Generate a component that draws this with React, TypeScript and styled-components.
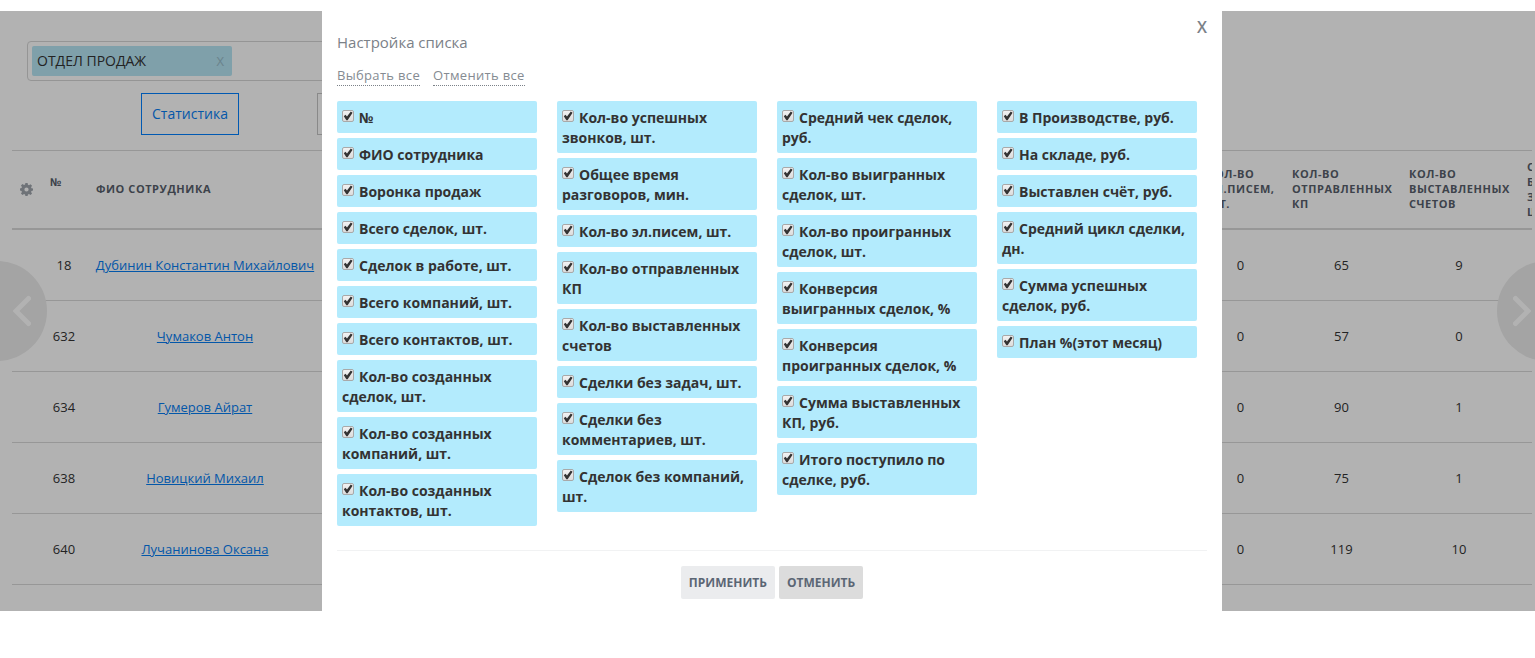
import React, { useState } from "react";
import styled, { createGlobalStyle } from "styled-components";

const GlobalStyle = createGlobalStyle`
  *, *::before, *::after { box-sizing: border-box; }
  body {
    margin: 0;
    background: #fff;
    color: #333;
    font-family: "Open Sans", "Noto Sans", sans-serif;
    font-size: 13px;
    line-height: 20px;
  }
  button { font-family: inherit; cursor: pointer; }
`;

const Screen = styled.div`
  position: relative;
  padding-top: 11px;
  overflow: hidden;
`;

const Page = styled.main`
  position: relative;
  padding: 30px 3px 26px 12px;
  overflow: hidden;
`;

const Shade = styled.div`
  position: absolute;
  inset: 0;
  background: rgba(0, 0, 0, 0.3);
`;

const FilterBox = styled.div`
  display: flex;
  width: 60%;
  height: 40px;
  margin-left: 15px;
  padding: 4px;
  border: 1px solid #d6d6d6;
  border-radius: 4px;
`;

const FilterTag = styled.div`
  display: flex;
  align-items: center;
  justify-content: space-between;
  width: 200px;
  padding: 0 8px 0 5px;
  border-radius: 2px;
  background: #b6e5f4;
  font-size: 14px;
`;

const TagRemove = styled.button`
  padding: 0;
  border: 0;
  background: none;
  color: #98bcc9;
  font-size: 13px;
`;

const ViewTabs = styled.div`
  display: flex;
  gap: 78px;
  margin: 12px 0 15px 129px;
`;

const ViewTab = styled.button<{ $active?: boolean }>`
  min-width: 98px;
  height: 42px;
  padding: 0 10px 2px;
  border: 1px solid ${(p) => (p.$active ? "#0080ff" : "#c4c4c4")};
  background: none;
  color: #057df2;
  font-size: 14px;
`;

const TableFrame = styled.div`
  overflow: hidden;
`;

const StatTable = styled.table`
  width: calc(100% + 86px);
  table-layout: fixed;
  border-collapse: separate;
  border-spacing: 0;
  border-top: 1px solid #d9d9d9;
`;

const HeadCell = styled.th`
  height: 79px;
  padding: 0 9px 2px;
  border-bottom: 2px solid #d9d9d9;
  color: #585f6c;
  font-size: 11px;
  font-weight: 700;
  line-height: 15px;
  letter-spacing: 0.05em;
  text-align: left;
  text-transform: uppercase;
  vertical-align: middle;
`;

const TopLine = styled.div`
  height: 30px;
`;

const Cell = styled.td`
  height: 71px;
  padding: 0;
  border-bottom: 1px solid #d9d9d9;
  text-align: center;
`;

const PersonLink = styled.a`
  color: #057df2;
  text-decoration: underline;
  white-space: nowrap;
`;

const GearButton = styled.button`
  display: block;
  margin: 2px 0 0 -1px;
  padding: 0;
  border: 0;
  background: none;
  color: #9fa5ad;
  svg { display: block; }
`;

const Pager = styled.button<{ $side: "left" | "right" }>`
  position: absolute;
  top: 250px;
  ${(p) => (p.$side === "left" ? "left: -53px;" : "right: -62px;")}
  display: flex;
  align-items: center;
  justify-content: ${(p) => (p.$side === "left" ? "flex-end" : "flex-start")};
  width: 100px;
  height: 100px;
  padding: 0 16px;
  border: 0;
  border-radius: 50%;
  background: #ebebeb;
  color: #fff;
`;

const Overlay = styled.div`
  position: absolute;
  inset: 0;
  display: flex;
  justify-content: center;
  padding-left: 9px;
`;

const Dialog = styled.section`
  position: relative;
  width: 900px;
  padding: 32px 15px 12px;
  background: #fff;
  color: #7b8188;
`;

const CloseButton = styled.button`
  position: absolute;
  top: 16px;
  right: 15px;
  padding: 0;
  border: 0;
  background: none;
  color: #7b8188;
  font-size: 16px;
  font-weight: 600;
  line-height: 22px;
`;

const Title = styled.h2`
  margin: 0;
  font-size: 15px;
  font-weight: 400;
  line-height: 20px;
`;

const BulkActions = styled.div`
  display: flex;
  gap: 13px;
  margin: 13px 0 15px;
`;

const BulkButton = styled.button`
  padding: 0;
  border: 0;
  border-bottom: 1px dotted #7b8188;
  background: none;
  color: #858b92;
  font-size: 13px;
  line-height: 20px;
  letter-spacing: 0.025em;
`;

const Columns = styled.div`
  display: grid;
  grid-template-columns: repeat(4, 200px);
  gap: 20px;
  align-items: start;
`;

const Column = styled.div`
  display: flex;
  flex-direction: column;
  gap: 5px;
`;

const Option = styled.label`
  padding: 7px 5px 5px;
  border-radius: 2px;
  background: #b3ebfd;
  color: #333;
  font-size: 14px;
  font-weight: 700;
  line-height: 20px;
  cursor: pointer;
`;

const Check = styled.input`
  appearance: none;
  width: 12px;
  height: 12px;
  margin: 0 5px 0 0;
  border: 1px solid #a9a9a9;
  border-radius: 2px;
  background: linear-gradient(#f2f2f2, #dcdcdc);
  vertical-align: 1px;
  &:checked::before {
    content: "";
    display: block;
    width: 10px;
    height: 10px;
    background: #333;
    clip-path: polygon(8% 52%, 24% 38%, 40% 56%, 78% 5%, 96% 18%, 46% 92%, 34% 92%);
  }
`;

const Footer = styled.footer`
  display: flex;
  justify-content: center;
  gap: 4px;
  margin-top: 24px;
  padding-top: 15px;
  border-top: 1px solid #f1f2f3;
`;

const FooterButton = styled.button<{ $dark?: boolean }>`
  height: 33px;
  padding: 0 8px;
  border: 0;
  border-radius: 2px;
  background: ${(p) => (p.$dark ? "#dcdcdc" : "#ebecee")};
  color: #5b6674;
  font-size: 12px;
  font-weight: 700;
  text-transform: uppercase;
`;

const optionColumns = [
  [
    "№",
    "ФИО сотрудника",
    "Воронка продаж",
    "Всего сделок, шт.",
    "Сделок в работе, шт.",
    "Всего компаний, шт.",
    "Всего контактов, шт.",
    "Кол-во созданных сделок, шт.",
    "Кол-во созданных компаний, шт.",
    "Кол-во созданных контактов, шт.",
  ],
  [
    "Кол-во успешных звонков, шт.",
    "Общее время разговоров, мин.",
    "Кол-во эл.писем, шт.",
    "Кол-во отправленных КП",
    "Кол-во выставленных счетов",
    "Сделки без задач, шт.",
    "Сделки без комментариев, шт.",
    "Сделок без компаний, шт.",
  ],
  [
    "Средний чек сделок, руб.",
    "Кол-во выигранных сделок, шт.",
    "Кол-во проигранных сделок, шт.",
    "Конверсия выигранных сделок, %",
    "Конверсия проигранных сделок, %",
    "Сумма выставленных КП, руб.",
    "Итого поступило по сделке, руб.",
  ],
  [
    "В Производстве, руб.",
    "На складе, руб.",
    "Выставлен счёт, руб.",
    "Средний цикл сделки, дн.",
    "Сумма успешных сделок, руб.",
    "План %(этот месяц)",
  ],
];

const allOptions = optionColumns.flat();

const people = [
  { id: 18, name: "Дубинин Константин Михайлович", mails: 0, offers: 65, bills: 9 },
  { id: 632, name: "Чумаков Антон", mails: 0, offers: 57, bills: 0 },
  { id: 634, name: "Гумеров Айрат", mails: 0, offers: 90, bills: 1 },
  { id: 638, name: "Новицкий Михаил", mails: 0, offers: 75, bills: 1 },
  { id: 640, name: "Лучанинова Оксана", mails: 0, offers: 119, bills: 10 },
];

const GearIcon = () => (
  <svg width="13" height="13" viewBox="0 0 13 13" aria-hidden="true">
    <path
      fill="currentColor"
      fillRule="evenodd"
      d="M5.4 0h2.2l.35 1.75 1.05.44 1.5-1 1.55 1.55-1 1.5.44 1.05L13 5.4v2.2l-1.51.35-.44 1.05 1 1.5-1.55 1.55-1.5-1-1.05.44L7.6 13H5.4l-.35-1.51L4 11.05l-1.5 1L.95 10.5l1-1.5-.44-1.05L0 7.6V5.4l1.51-.3.44-1.1-1-1.5L2.5.95l1.5 1 1.05-.44zM6.5 4.4a2.1 2.1 0 1 0 0 4.2 2.1 2.1 0 0 0 0-4.2z"
    />
  </svg>
);

const Chevron = ({ side }: { side: "left" | "right" }) => (
  <svg width="18" height="32" viewBox="0 0 18 32" fill="none" aria-hidden="true">
    <path
      d={side === "left" ? "M15.500 3.500L3 16l12.500 12.500" : "M2.500 3.500L15 16L2.500 28.500"}
      stroke="currentColor"
      strokeWidth="5"
      strokeLinecap="round"
    />
  </svg>
);

export default function App() {
  const [selected, setSelected] = useState<string[]>(allOptions);

  const toggle = (name: string) =>
    setSelected((list) =>
      list.includes(name) ? list.filter((item) => item !== name) : [...list, name]
    );

  return (
    <>
      <GlobalStyle />
      <Screen>
        <Page>
          <FilterBox>
            <FilterTag>
              ОТДЕЛ ПРОДАЖ
              <TagRemove type="button">X</TagRemove>
            </FilterTag>
          </FilterBox>
          <ViewTabs>
            <ViewTab type="button" $active>Статистика</ViewTab>
            <ViewTab type="button" />
          </ViewTabs>
          <TableFrame>
            <StatTable>
              <colgroup>
                <col style={{ width: 29 }} />
                <col style={{ width: 46 }} />
                <col style={{ width: 236 }} />
                <col />
                <col style={{ width: 85 }} />
                <col style={{ width: 117 }} />
                <col style={{ width: 118 }} />
                <col style={{ width: 100 }} />
              </colgroup>
              <thead>
                <tr>
                  <HeadCell>
                    <GearButton type="button" aria-label="Настройка списка">
                      <GearIcon />
                    </GearButton>
                  </HeadCell>
                  <HeadCell><TopLine>№</TopLine></HeadCell>
                  <HeadCell>ФИО сотрудника</HeadCell>
                  <HeadCell />
                  <HeadCell>Кол-во эл.писем, шт.</HeadCell>
                  <HeadCell>Кол-во отправленных КП</HeadCell>
                  <HeadCell>Кол-во выставленных счетов</HeadCell>
                  <HeadCell>Сделки<br />без<br />задач,<br />шт.</HeadCell>
                </tr>
              </thead>
              <tbody>
                {people.map((person) => (
                  <tr key={person.id}>
                    <Cell />
                    <Cell>{person.id}</Cell>
                    <Cell><PersonLink href="#">{person.name}</PersonLink></Cell>
                    <Cell />
                    <Cell>{person.mails}</Cell>
                    <Cell>{person.offers}</Cell>
                    <Cell>{person.bills}</Cell>
                    <Cell />
                  </tr>
                ))}
              </tbody>
            </StatTable>
          </TableFrame>
          <Pager type="button" $side="left" aria-label="Назад"><Chevron side="left" /></Pager>
          <Pager type="button" $side="right" aria-label="Вперёд"><Chevron side="right" /></Pager>
          <Shade />
        </Page>
        <Overlay>
          <Dialog role="dialog" aria-labelledby="dialog-title">
            <CloseButton type="button">X</CloseButton>
            <Title id="dialog-title">Настройка списка</Title>
            <BulkActions>
              <BulkButton type="button" onClick={() => setSelected(allOptions)}>Выбрать все</BulkButton>
              <BulkButton type="button" onClick={() => setSelected([])}>Отменить все</BulkButton>
            </BulkActions>
            <Columns>
              {optionColumns.map((column, index) => (
                <Column key={index}>
                  {column.map((name) => (
                    <Option key={name}>
                      <Check
                        type="checkbox"
                        checked={selected.includes(name)}
                        onChange={() => toggle(name)}
                      />
                      {name}
                    </Option>
                  ))}
                </Column>
              ))}
            </Columns>
            <Footer>
              <FooterButton type="button">Применить</FooterButton>
              <FooterButton type="button" $dark>Отменить</FooterButton>
            </Footer>
          </Dialog>
        </Overlay>
      </Screen>
    </>
  );
}
